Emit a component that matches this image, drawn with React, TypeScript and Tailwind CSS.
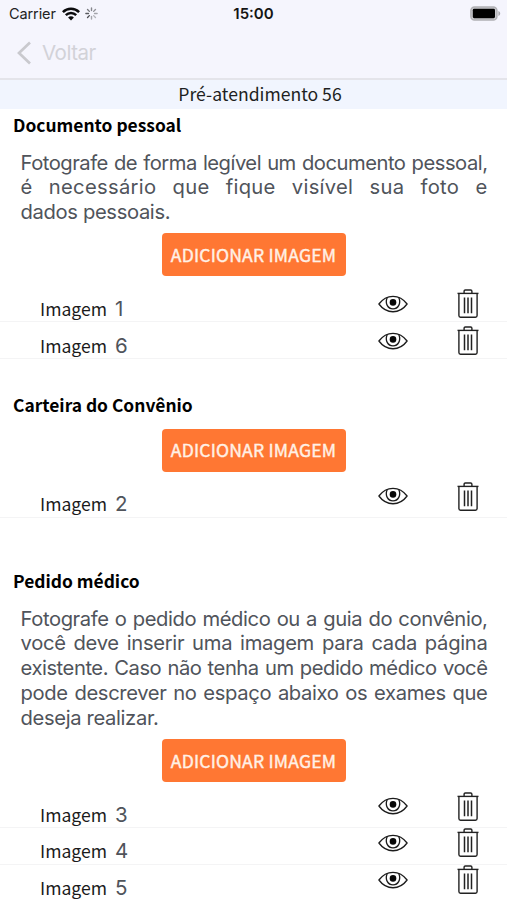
type Line = { text: string; className?: string };

type Section = {
  title: string;
  titleClass: string;
  lines?: Line[];
  bodyClass?: string;
  buttonClass: string;
  rowsClass: string;
  images: number[];
};

const sections: Section[] = [
  {
    title: "Documento pessoal",
    titleClass: "mt-[3px]",
    lines: [
      { text: "Fotografe de forma legível um documento pessoal,", className: "tracking-[-0.48px]" },
      { text: "é necessário que fique visível sua foto e", className: "tracking-[0.3px]" },
      { text: "dados pessoais.", className: "tracking-[-0.35px] [text-align-last:left]" },
    ],
    bodyClass: "mt-[13.5px]",
    buttonClass: "mt-[8.5px]",
    rowsClass: "pt-[4px]",
    images: [1, 6],
  },
  {
    title: "Carteira do Convênio",
    titleClass: "mt-[33px]",
    buttonClass: "mt-[12px]",
    rowsClass: "pt-[1px]",
    images: [2],
  },
  {
    title: "Pedido médico",
    titleClass: "mt-[50px]",
    lines: [
      { text: "Fotografe o pedido médico ou a guia do convênio,", className: "tracking-[-0.4px]" },
      { text: "você deve inserir uma imagem para cada página", className: "tracking-[-0.3px]" },
      { text: "existente. Caso não tenha um pedido médico você", className: "tracking-[-0.44px]" },
      { text: "pode descrever no espaço abaixo os exames que", className: "tracking-[-0.35px]" },
      { text: "deseja realizar.", className: "tracking-[-0.35px] [text-align-last:left]" },
    ],
    bodyClass: "mt-[14px]",
    buttonClass: "mt-[8.5px]",
    rowsClass: "pt-[0.5px]",
    images: [3, 4, 5],
  },
];

function WifiIcon() {
  return (
    <svg width="18" height="14" viewBox="0 0 18 14" fill="none" stroke="#0b0b0d">
      <path d="M0.9 5.1C5.4 0.6 12.6 0.6 17.1 5.1" strokeWidth="2.5" />
      <path d="M3.8 8.1C6.7 5.2 11.3 5.2 14.2 8.1" strokeWidth="2.4" />
      <path d="M9 13.4L6.1 10.4C7.7 8.8 10.3 8.8 11.9 10.4Z" fill="#0b0b0d" stroke="none" />
    </svg>
  );
}

const spokes = ["#85868c", "#929399", "#a3a4aa", "#b4b5bb", "#a4a5ab", "#4c4d52", "#58595e", "#77787d"];

function Spinner() {
  return (
    <svg width="13" height="13" viewBox="0 0 13 13">
      {spokes.map((color, i) => (
        <line
          key={i}
          x1="6.5"
          y1="0.9"
          x2="6.5"
          y2="3.5"
          stroke={color}
          strokeWidth="1.4"
          strokeLinecap="round"
          transform={`rotate(${i * 45} 6.5 6.5)`}
        />
      ))}
    </svg>
  );
}

function Battery() {
  return (
    <svg width="31" height="15" viewBox="0 0 31 15">
      <rect x="0.9" y="0.9" width="26" height="13.2" rx="3.6" fill="#c9c9cd" stroke="#b0b0b4" strokeWidth="1.5" />
      <rect x="2.8" y="2.8" width="22.2" height="9.4" rx="1.4" fill="#000" />
      <path d="M28.4 5C30.8 5.8 30.8 9.2 28.4 10Z" fill="#a8a8ad" />
    </svg>
  );
}

function EyeIcon() {
  return (
    <svg width="30" height="18" viewBox="0 0 30 18" fill="none" stroke="#1c1c1c" strokeWidth="1.3">
      <path d="M0.9 9C8.5 -1.3 21.5 -1.3 29.1 9C21.5 19.3 8.5 19.3 0.9 9Z" strokeLinejoin="round" />
      <path d="M9.2 2.5C6.8 8.4 9.7 13.9 15 13.9C20.3 13.9 23.2 8.4 20.8 2.5" />
      <circle cx="15" cy="7.4" r="3.3" fill="#080808" stroke="none" />
    </svg>
  );
}

function TrashIcon() {
  return (
    <svg width="22" height="29" viewBox="0 0 22 29" fill="none" stroke="#222" strokeWidth="1.4">
      <path d="M0.5 4.4H21.5" />
      <path d="M7.1 4.2V2.3Q7.1 1 8.4 1H13.6Q14.9 1 14.9 2.3V4.2" />
      <path d="M1.9 4.6V26.6Q1.9 28.2 3.5 28.2H18.5Q20.1 28.2 20.1 26.6V4.6" />
      <path d="M7.5 8.6V24.2M11 8.6V24.2M14.5 8.6V24.2" strokeWidth="1.5" />
    </svg>
  );
}

function ImageRow({ number, iconClass }: { number: number; iconClass: string }) {
  return (
    <div className="flex h-[36.75px] items-start border-b border-[#f4f4f5] pl-[40px]">
      <div className="flex w-[338px] items-baseline pt-[10.5px] text-[17.6px] leading-[26px] text-[#1b1b1b]">
        <span className="w-[75px]">Imagem</span>
        <span className="font-['Inter',sans-serif] text-[20.5px] tracking-[-0.4px] text-[#50545b]">{number}</span>
      </div>
      <div className={`flex items-center ${iconClass}`}>
        <EyeIcon />
        <div className="ml-[49px]">
          <TrashIcon />
        </div>
      </div>
    </div>
  );
}

export default function App() {
  return (
    <div className="h-[900px] w-[507px] overflow-hidden bg-white font-['Noto_Sans_CJK_SC',sans-serif] text-black">
      <header className="h-[80px] border-b-2 border-[#e4e4ea] bg-[#f5f5fd]">
        <div className="grid h-[27px] grid-cols-3 items-center pr-[6px] pl-[9px] font-['Inter',sans-serif]">
          <div className="flex items-center">
            <span className="w-[53px] pt-[1px] text-[14.5px] tracking-[-0.1px] text-[#222]">Carrier</span>
            <WifiIcon />
            <span className="ml-[5px]">
              <Spinner />
            </span>
          </div>
          <span className="pt-[2px] pr-[3px] text-center text-[15px] font-semibold text-[#151515]">15:00</span>
          <div className="flex justify-end">
            <Battery />
          </div>
        </div>
        <button className="flex h-[51px] items-center pl-[16px] font-['Inter',sans-serif] text-[20.5px] tracking-[-0.5px] text-[#d2d2d8]">
          <svg width="16" height="24" viewBox="0 0 16 24" fill="none" stroke="#c9c9ce" strokeWidth="2.7">
            <path d="M14 1.5L3 12L14 22.5" />
          </svg>
          <span className="ml-[10px] pt-[1px]">Voltar</span>
        </button>
      </header>

      <div className="h-[29px] bg-[#f1f5fe] pl-[13px] text-center text-[17.6px] leading-[28px] text-[#1e1f22]">
        Pré-atendimento 56
      </div>

      {sections.map((section) => (
        <section key={section.title}>
          <h2 className={`h-[25px] pl-[13px] text-[17.4px] leading-[25px] font-bold ${section.titleClass}`}>
            {section.title}
          </h2>
          {section.lines && (
            <div
              className={`ml-[20.5px] w-[467px] font-['Inter',sans-serif] text-[20.2px] leading-[24.8px] text-[#50545b] ${section.bodyClass}`}
            >
              {section.lines.map((line) => (
                <p key={line.text} className={`whitespace-nowrap [text-align-last:justify] ${line.className}`}>
                  {line.text}
                </p>
              ))}
            </div>
          )}
          <button
            className={`mx-auto block h-[43px] w-[184px] rounded-[4px] bg-[#ff7733] text-[17.6px] leading-[42px] font-normal tracking-[0.17px] whitespace-nowrap text-[#fff1e6] [-webkit-text-stroke:0.4px_#fff1e6] ${section.buttonClass}`}
          >
            ADICIONAR IMAGEM
          </button>
          <div className="mt-[9px]">
            {section.images.map((n) => (
              <ImageRow key={n} number={n} iconClass={section.rowsClass} />
            ))}
          </div>
        </section>
      ))}
    </div>
  );
}
